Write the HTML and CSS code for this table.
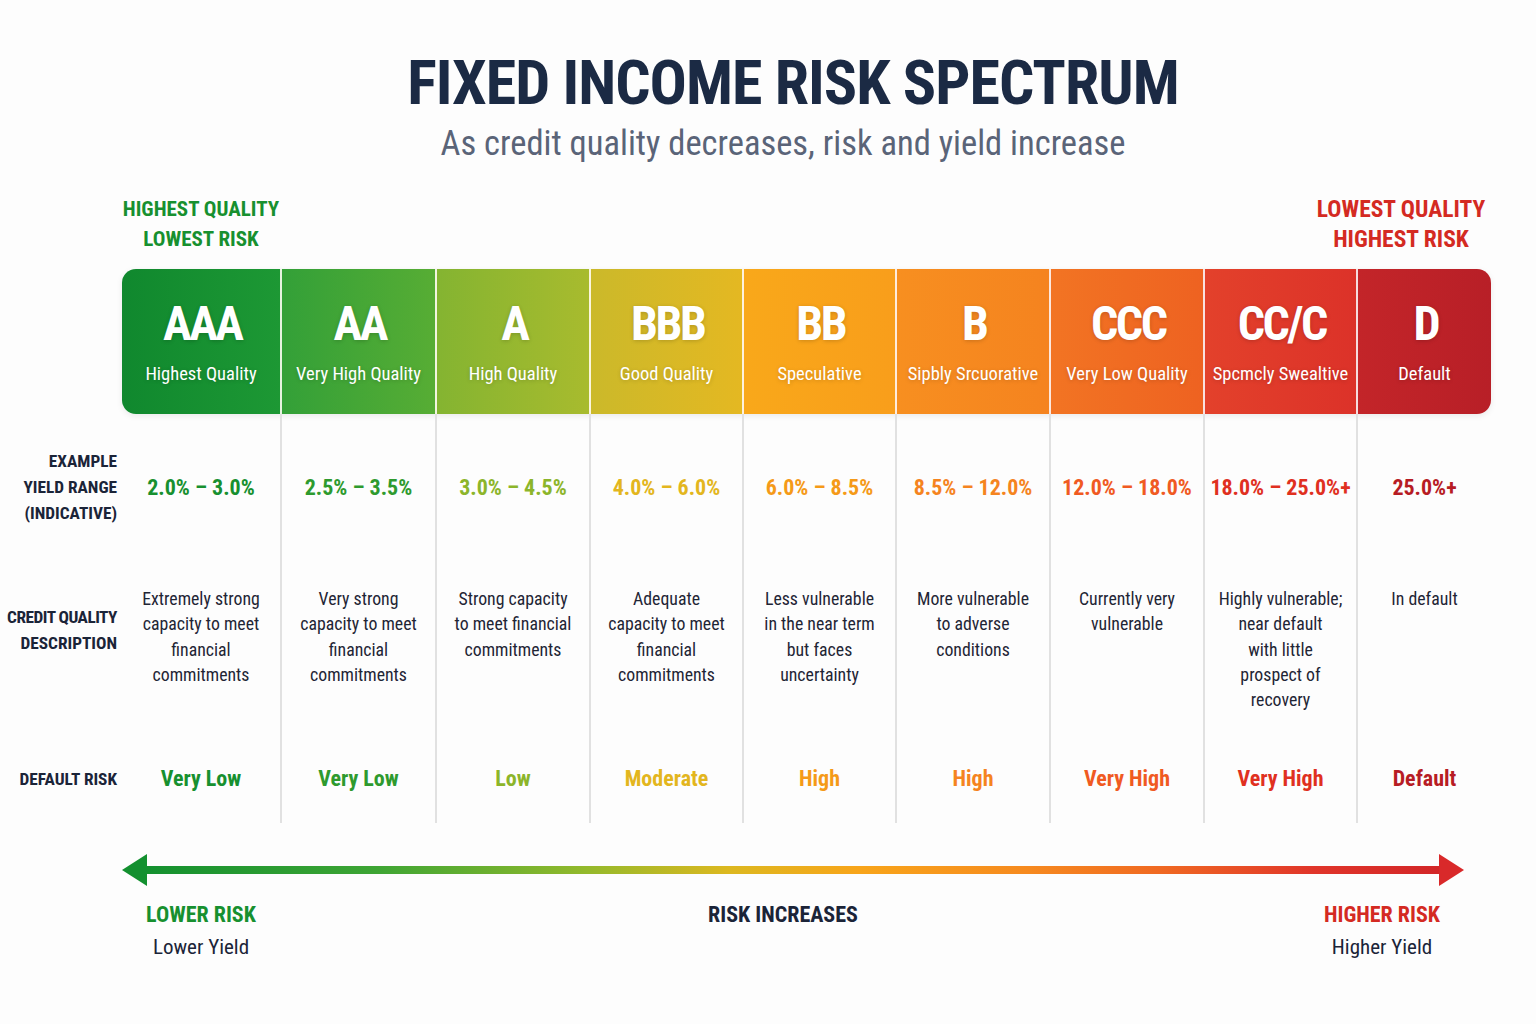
FILE: index.html
```html
<!DOCTYPE html>
<html lang="en">
<head>
<meta charset="utf-8">
<title>Fixed Income Risk Spectrum</title>
<link rel="stylesheet" href="styles.css">
</head>
<body>
<div class="page">
  <header class="head">
    <h1 class="title">FIXED INCOME RISK SPECTRUM</h1>
    <p class="subtitle">As credit quality decreases, risk and yield increase</p>
  </header>

  <div class="ends">
    <div class="end end-good">HIGHEST QUALITY<br>LOWEST RISK</div>
    <div class="end end-bad">LOWEST QUALITY<br>HIGHEST RISK</div>
  </div>

  <div class="band">
    <div class="cell g1"><div class="grade">AAA</div><div class="grade-sub">Highest Quality</div></div>
    <div class="cell g2"><div class="grade">AA</div><div class="grade-sub">Very High Quality</div></div>
    <div class="cell g3"><div class="grade">A</div><div class="grade-sub">High Quality</div></div>
    <div class="cell g4"><div class="grade">BBB</div><div class="grade-sub">Good Quality</div></div>
    <div class="cell g5"><div class="grade">BB</div><div class="grade-sub">Speculative</div></div>
    <div class="cell g6"><div class="grade">B</div><div class="grade-sub">Sipbly Srcuorative</div></div>
    <div class="cell g7"><div class="grade">CCC</div><div class="grade-sub">Very Low Quality</div></div>
    <div class="cell g8"><div class="grade">CC/C</div><div class="grade-sub">Spcmcly Swealtive</div></div>
    <div class="cell g9"><div class="grade">D</div><div class="grade-sub">Default</div></div>
  </div>

  <div class="table">
    <div class="label label-yield">EXAMPLE<br>YIELD RANGE<br>(INDICATIVE)</div>
    <div class="data yield t1">2.0% – 3.0%</div>
    <div class="data yield t2 sep">2.5% – 3.5%</div>
    <div class="data yield t3 sep">3.0% – 4.5%</div>
    <div class="data yield t4 sep">4.0% – 6.0%</div>
    <div class="data yield t5 sep">6.0% – 8.5%</div>
    <div class="data yield t6 sep">8.5% – 12.0%</div>
    <div class="data yield t7 sep">12.0% – 18.0%</div>
    <div class="data yield t8 sep">18.0% – 25.0%+</div>
    <div class="data yield t9 sep">25.0%+</div>

    <div class="label label-desc"><span class="tight">CREDIT QUALITY</span><br>DESCRIPTION</div>
    <div class="data desc">Extremely strong<br>capacity to meet<br>financial<br>commitments</div>
    <div class="data desc sep">Very strong<br>capacity to meet<br>financial<br>commitments</div>
    <div class="data desc sep">Strong capacity<br>to meet financial<br>commitments</div>
    <div class="data desc sep">Adequate<br>capacity to meet<br>financial<br>commitments</div>
    <div class="data desc sep">Less vulnerable<br>in the near term<br>but faces<br>uncertainty</div>
    <div class="data desc sep">More vulnerable<br>to adverse<br>conditions</div>
    <div class="data desc sep">Currently very<br>vulnerable</div>
    <div class="data desc sep">Highly vulnerable;<br>near default<br>with little<br>prospect of<br>recovery</div>
    <div class="data desc sep">In default</div>

    <div class="label label-risk">DEFAULT RISK</div>
    <div class="data risk t1">Very Low</div>
    <div class="data risk t2 sep">Very Low</div>
    <div class="data risk t3 sep">Low</div>
    <div class="data risk t4 sep">Moderate</div>
    <div class="data risk t5 sep">High</div>
    <div class="data risk t6 sep">High</div>
    <div class="data risk t7 sep">Very High</div>
    <div class="data risk t8 sep">Very High</div>
    <div class="data risk t9 sep">Default</div>
  </div>

  <div class="arrow">
    <svg width="1342" height="40" viewBox="0 0 1342 40" aria-hidden="true">
      <defs>
        <linearGradient id="spec" x1="0" y1="0" x2="1" y2="0">
          <stop offset="0" stop-color="#13902f"/>
          <stop offset="0.18" stop-color="#3ea534"/>
          <stop offset="0.34" stop-color="#93b92c"/>
          <stop offset="0.45" stop-color="#dcb820"/>
          <stop offset="0.55" stop-color="#f8a51a"/>
          <stop offset="0.68" stop-color="#f68a1f"/>
          <stop offset="0.78" stop-color="#f06a22"/>
          <stop offset="0.9" stop-color="#e0352a"/>
          <stop offset="1" stop-color="#d22628"/>
        </linearGradient>
      </defs>
      <rect x="20" y="16" width="1302" height="8" fill="url(#spec)"/>
      <polygon points="0,20 25,4 25,36" fill="#13902f"/>
      <polygon points="1342,20 1317,4 1317,36" fill="#d9292a"/>
    </svg>
  </div>

  <div class="legend">
    <div class="leg leg-low"><div class="leg-head">LOWER RISK</div><div class="leg-sub">Lower Yield</div></div>
    <div class="leg leg-mid"><div class="leg-head">RISK INCREASES</div></div>
    <div class="leg leg-high"><div class="leg-head">HIGHER RISK</div><div class="leg-sub">Higher Yield</div></div>
  </div>
</div>
</body>
</html>
```

FILE: styles.css
```css
* { box-sizing: border-box; }

html, body {
  margin: 0;
  padding: 0;
  background: #fdfdfd;
}

body {
  font-family: Roboto, "Liberation Sans", sans-serif;
  font-stretch: 75%;
  font-variation-settings: "wdth" 75;
  color: #1b2438;
  width: 1536px;
  height: 1024px;
  overflow: hidden;
}

.page {
  padding-top: 48px;
}

.head {
  text-align: center;
  padding-left: 50px;
}

.title {
  margin: 0;
  font-size: 62px;
  line-height: 70px;
  font-weight: 700;
  color: #1b2a44;
  letter-spacing: -1px;
}

.subtitle {
  margin: 4px 0 0;
  padding-right: 20px;
  font-size: 34.5px;
  line-height: 42px;
  color: #5a6478;
}

.ends {
  display: flex;
  justify-content: space-between;
  margin: 30px 0 0 122px;
  width: 1369px;
}

.end {
  font-size: 21px;
  line-height: 30px;
  font-weight: 700;
  text-align: center;
  white-space: nowrap;
}

.end-good { width: 158px; color: #17902f; }
.end-bad { width: 180px; font-size: 23.5px; color: #d42a22; }

.band {
  display: grid;
  grid-template-columns: 158px 155px 154px 153px 153px 154px 154px 153px 135px;
  margin: 15px 0 0 122px;
  width: 1369px;
  height: 145px;
  border-radius: 14px;
  overflow: hidden;
  box-shadow: 0 2px 6px rgba(0, 0, 0, 0.08);
}

.cell {
  display: flex;
  flex-direction: column;
  align-items: center;
  padding-top: 29px;
  color: #fff;
  text-shadow: 0 1px 4px rgba(0, 0, 0, 0.18);
}

.cell + .cell { border-left: 2px solid rgba(255, 255, 255, 0.85); }

.grade {
  font-size: 48px;
  line-height: 52px;
  font-weight: 700;
  letter-spacing: -2.5px;
  padding-left: 2.5px;
}

.grade-sub {
  margin-top: 12px;
  font-size: 18.5px;
  line-height: 24px;
  white-space: nowrap;
}

.g1 { background: linear-gradient(90deg, #10882e, #1d9834); }
.g2 { background: linear-gradient(90deg, #33a038, #57ad34); }
.g3 { background: linear-gradient(90deg, #84b431, #a8bb2e); }
.g4 { background: linear-gradient(90deg, #cbb92a, #e4b822); }
.g5 { background: linear-gradient(90deg, #f9a81a, #f99e1b); }
.g6 { background: linear-gradient(90deg, #f78f20, #f5831f); }
.g7 { background: linear-gradient(90deg, #f27423, #ee6221); }
.g8 { background: linear-gradient(90deg, #e3412b, #dc3229); }
.g9 { background: linear-gradient(90deg, #c32529, #b81f27); }

.table {
  display: grid;
  grid-template-columns: 122px 158px 155px 154px 153px 153px 154px 154px 153px 135px;
  grid-template-rows: 146px 174px 89px;
}

.label {
  text-align: right;
  padding-right: 5px;
  font-size: 17.3px;
  line-height: 26px;
  font-weight: 700;
  color: #1b2438;
  white-space: nowrap;
}

.tight { letter-spacing: -0.5px; }

.label-yield { align-self: center; }
.label-desc { padding-top: 44px; }
.label-risk { padding-top: 32px; }

.data { text-align: center; }

.sep { border-left: 2px solid #e1e1e1; }

.yield {
  display: flex;
  align-items: center;
  justify-content: center;
  font-size: 22px;
  font-weight: 700;
  white-space: nowrap;
}

.desc {
  padding-top: 26px;
  font-size: 17.8px;
  line-height: 25.3px;
  color: #1f2535;
  white-space: nowrap;
}

.risk {
  padding-top: 31px;
  font-size: 22px;
  line-height: 28px;
  font-weight: 700;
}

.t1 { color: #17902f; }
.t2 { color: #2e9a2e; }
.t3 { color: #8cb52a; }
.t4 { color: #e3b61e; }
.t5 { color: #f59a18; }
.t6 { color: #f5841f; }
.t7 { color: #f05a22; }
.t8 { color: #e0301f; }
.t9 { color: #b71c24; }

.arrow {
  margin: 27px 0 0 122px;
  height: 40px;
}

.arrow svg { display: block; }

.legend {
  display: flex;
  margin: 10px 0 0 122px;
}

.leg { text-align: center; }
.leg-low { width: 158px; }
.leg-mid { width: 1006px; }
.leg-high { width: 192px; }

.leg-head {
  font-size: 22px;
  line-height: 30px;
  font-weight: 700;
}

.leg-low .leg-head { color: #17902f; }
.leg-mid .leg-head { color: #1b2438; }
.leg-high .leg-head { color: #d42a22; }

.leg-sub {
  margin-top: 2px;
  font-size: 21px;
  line-height: 30px;
  color: #1b2438;
}
```
